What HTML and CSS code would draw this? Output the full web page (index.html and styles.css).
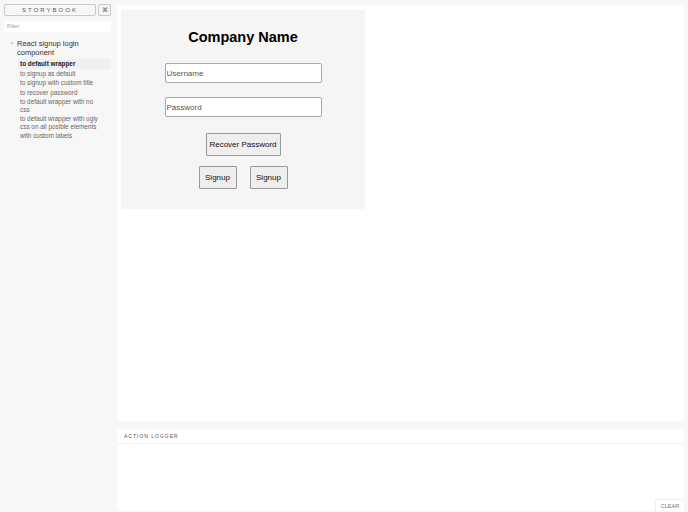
FILE: index.html
```html
<!DOCTYPE html>
<html lang="en">
<head>
  <meta charset="UTF-8" />
  <title>Storybook</title>
  <link rel="stylesheet" href="styles.css">
</head>
<body>
  <div class="layout">
    <div class="sidebar">
      <div class="brand-row">
        <div class="brand">STORYBOOK</div>
        <div class="shortcut">⌘</div>
      </div>
      <div class="filter">Filter</div>
      <div class="kind">
        <div class="kind-name"><span class="caret">⌄</span>React signup login component</div>
        <div class="story active">to default wrapper</div>
        <div class="story">to signup as default</div>
        <div class="story">to signup with custom title</div>
        <div class="story">to recover password</div>
        <div class="story">to default wrapper with no css</div>
        <div class="story">to default wrapper with ugly css on all posible elements</div>
        <div class="story">with custom labels</div>
      </div>
    </div>
    <div class="resizer-v"></div>
    <div class="main">
      <div class="preview">
        <div class="wrapper">
          <h1>Company Name</h1>
          <input class="field" type="text" placeholder="Username">
          <input class="field" type="password" placeholder="Password">
          <button class="btn recover">Recover Password</button>
          <div class="btn-row">
            <button class="btn">Signup</button>
            <button class="btn">Signup</button>
          </div>
        </div>
      </div>
      <div class="resizer-h"></div>
      <div class="logger">
        <div class="logger-head">ACTION LOGGER</div>
        <div class="logger-body"></div>
        <button class="clear">CLEAR</button>
      </div>
    </div>
  </div>
</body>
</html>
```

FILE: styles.css
```css
body, html {
  margin: 0;
  padding: 0;
  height: 100%;
  background: #f7f7f7;
  font-family: "Liberation Sans", Arial, sans-serif;
}
.layout {
  display: flex;
  height: 512px;
}
.sidebar {
  width: 112px;
  padding: 4px 0 0 4px;
  box-sizing: content-box;
}
.brand-row {
  display: flex;
  gap: 2px;
}
.brand {
  flex: 1;
  height: 10px;
  border: 1px solid #c9c9c9;
  border-radius: 2px;
  font-size: 6px;
  letter-spacing: 2px;
  color: #555;
  text-align: center;
  line-height: 10px;
}
.shortcut {
  width: 11px;
  height: 10px;
  border: 1px solid #c9c9c9;
  border-radius: 2px;
  font-size: 6px;
  color: #555;
  text-align: center;
  line-height: 10px;
  margin-right: 5px;
}
.filter {
  margin: 5px 5px 0 0;
  height: 11px;
  background: #fff;
  font-size: 5.5px;
  color: #999;
  line-height: 11px;
  padding-left: 3px;
}
.kind {
  margin-top: 8px;
  margin-right: 5px;
}
.kind-name {
  position: relative;
  font-size: 7.5px;
  color: #333;
  padding-left: 13px;
  line-height: 8.5px;
  margin-bottom: 2px;
}
.caret {
  position: absolute;
  left: 5px;
  top: -2px;
  font-size: 7px;
  color: #999;
}
.story {
  font-size: 6.4px;
  color: #666;
  padding: 1px 8px 1px 16px;
  line-height: 7.5px;
}
.story.active {
  font-weight: bold;
  color: #222;
  background: #f0f0f0;
  margin-left: 14px;
  padding-left: 2px;
}
.resizer-v {
  width: 1px;
}
.main {
  flex: 1;
  display: flex;
  flex-direction: column;
  padding: 5px 4px 1px 0;
}
.preview {
  height: 416px;
  background: #fff;
  border-radius: 3px;
  padding: 5px 0 0 4px;
  box-sizing: border-box;
}
.wrapper {
  width: 244px;
  height: 199px;
  background: #f5f5f5;
  display: flex;
  flex-direction: column;
  align-items: center;
}
.wrapper h1 {
  margin: 17px 0 16px;
  font-size: 14.5px;
  line-height: 20px;
  color: #000;
}
.field {
  width: 157px;
  height: 20px;
  box-sizing: border-box;
  border: 1px solid #a8a8a8;
  border-radius: 2px;
  padding: 0 1px;
  font-size: 8px;
  font-family: "Liberation Sans", Arial, sans-serif;
  margin-bottom: 14px;
  background: #fff;
}
.field::placeholder {
  color: #555;
}
.btn {
  height: 23px;
  padding: 0;
  border: 1px solid #9a9a9a;
  border-radius: 1px;
  background: #eeeeee;
  font-size: 8px;
  font-family: "Liberation Sans", Arial, sans-serif;
  font-weight: normal;
  color: #111;
  white-space: nowrap;
}
.recover {
  margin-top: 2px;
  width: 75px;
}
.btn-row {
  display: flex;
  gap: 13px;
  margin-top: 10px;
}
.btn-row .btn {
  width: 38px;
}
.resizer-h {
  height: 8px;
}
.logger {
  flex: 1;
  background: #fff;
  border-radius: 3px;
  display: flex;
  flex-direction: column;
  position: relative;
}
.logger-head {
  height: 14px;
  line-height: 14px;
  padding-left: 7px;
  font-size: 5px;
  letter-spacing: 1px;
  color: #555;
  border-bottom: 1px solid #f3f3f3;
}
.logger-body {
  flex: 1;
}
.clear {
  position: absolute;
  right: 0;
  bottom: 0;
  width: 29px;
  height: 12px;
  border: none;
  border-top: 1px solid #eee;
  border-left: 1px solid #eee;
  background: #fff;
  font-size: 5.5px;
  color: #777;
  padding: 0;
  font-family: "Liberation Sans", Arial, sans-serif;
}
```
